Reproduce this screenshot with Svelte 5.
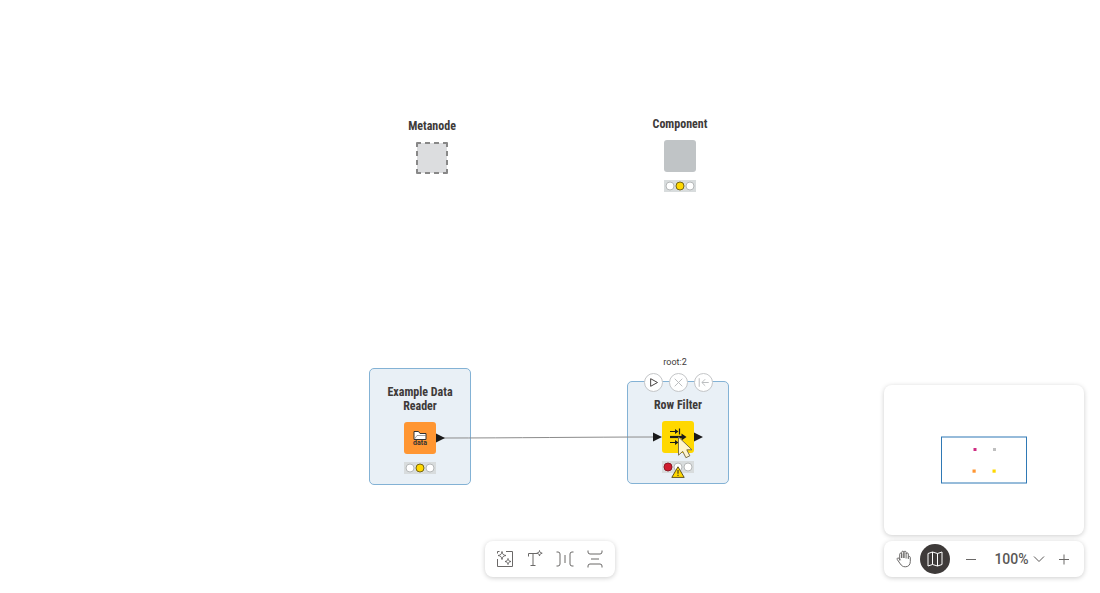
<script lang="ts">
  type Kind = 'metanode' | 'component' | 'reader' | 'filter';
  interface WorkflowNode {
    kind: Kind;
    name: string;
    x: number;
    y: number;
    selected: boolean;
    lights: string[];
  }

  const nodes: WorkflowNode[] = [
    { kind: 'metanode', name: 'Metanode', x: 381, y: 102, selected: false, lights: [] },
    { kind: 'component', name: 'Component', x: 629, y: 100, selected: false, lights: ['', 'yellow', ''] },
    { kind: 'reader', name: 'Example Data Reader', x: 369, y: 368, selected: true, lights: ['', 'yellow', ''] },
    { kind: 'filter', name: 'Row Filter', x: 627, y: 381, selected: true, lights: ['red', '', ''] }
  ];

  let zoom = $state(100);
</script>

<main class="canvas">
  {#each nodes as node}
    <article class="node" class:selected={node.selected} style="left: {node.x}px; top: {node.y}px">
      {#if node.kind === 'filter'}
        <div class="hover-bar">
          <span class="node-id">root:2</span>
          <div class="actions">
            <button aria-label="Execute">
              <svg viewBox="0 0 20 20"><path d="M7 6 14.200 10 7 14z" /></svg>
            </button>
            <button aria-label="Cancel" disabled>
              <svg viewBox="0 0 20 20"><path d="m6 6 8 8m0-8-8 8" /></svg>
            </button>
            <button aria-label="Reset" disabled>
              <svg viewBox="0 0 20 20"><path d="M5.500 5.500v9M15.500 10h-7m3.300-3.500L8.300 10l3.500 3.500" /></svg>
            </button>
          </div>
        </div>
      {/if}
      <h2>{node.name}</h2>
      <div class="torso {node.kind}">
        {#if node.kind === 'metanode'}
          <svg viewBox="0 0 32 32">
            <rect x="1" y="1" width="30" height="30" rx="1" fill="#dcdddf" />
            <path d="M1 5V1h4M9 1h5M18 1h5M27 1h4v4M31 9v5M31 18v5M31 27v4h-4M23 31h-5M14 31H9M5 31H1v-4M1 23v-5M1 14V9" fill="none" stroke="#888" stroke-width="2" stroke-linejoin="round" />
          </svg>
        {:else if node.kind === 'reader'}
          <svg viewBox="0 0 32 32">
            <path d="M10 17.500V9.500h4.500l1.500 2h6v6z" fill="#fff" stroke="#333" />
            <path d="M10.500 17 13 13.500h9" fill="none" stroke="#777" stroke-width=".7" />
            <text x="16" y="22.500" text-anchor="middle">data</text>
          </svg>
        {:else if node.kind === 'filter'}
          <svg viewBox="0 0 32 32">
            <g fill="none" stroke="#1c1c1c" stroke-width="1.200">
              <path d="M8 10.500h6M8 21.500h6M17.500 7.500v6M17.500 18.500v6" />
              <path d="M8 16h12" stroke-width="2.200" />
            </g>
            <path d="m13 8 3.500 2.500L13 13zM13 19l3.500 2.500L13 24zM19.500 12.500l5 3.500-5 3.500z" fill="#1c1c1c" />
          </svg>
        {/if}
      </div>
      {#if node.lights.length}
        <svg class="lights" viewBox="0 0 32 12" aria-hidden="true">
          {#each node.lights as light, i}<circle class={light} cx={6 + i * 10} cy="6" r="4" />{/each}
        </svg>
      {/if}
      {#if node.kind === 'filter'}
        <svg class="warning" viewBox="0 0 14 12" role="img" aria-label="Warning">
          <path d="M7 .8 13.200 11.400H.8z" fill="#ffd800" stroke="#5e5322" stroke-linejoin="round" />
          <path d="M7 4v3.800M7 8.800v1.200" fill="none" stroke="#4a4119" stroke-width="1.200" />
        </svg>
      {/if}
    </article>
  {/each}

  <svg class="wires" aria-hidden="true">
    <path d="M443 438C510 438 590 437 655 437" fill="none" stroke="#8c8c8c" />
    <path d="m436 433.500 9 4.500-9 4.500zM653 432.500l9 4.500-9 4.500zM694 432.500l9 4.500-9 4.500z" fill="#1a1a1a" />
    <path d="M678.500 437v18.200l4.200-3.800 3.200 6.300 3.900-1.900-3-6h5.200z" fill="#fff5cd" stroke="#7b6f4a" />
  </svg>

  <nav class="panel tools" aria-label="Canvas tools">
    <button aria-label="K-AI">
      <svg viewBox="0 0 20 20">
        <path d="M11 2.500h6.500v15h-15V10M2.500 4.500v-2h2M7 2.500c.5 2.800 1.200 3.500 4 4-2.800.5-3.500 1.200-4 4-.5-2.800-1.200-3.500-4-4 2.800-.5 3.500-1.200 4-4zM13 9.500c.4 2.100.9 2.600 3 3-2.100.4-2.600.9-3 3-.4-2.100-.9-2.600-3-3 2.100-.4 2.600-.9 3-3z" />
      </svg>
    </button>
    <button aria-label="New annotation">
      <svg viewBox="0 0 20 20">
        <path d="M3.500 7.500v-3H12M8 4.500v12M5.500 16.500h5M14.500 1.500c.4 1.900.8 2.300 2.700 2.700-1.900.4-2.300.8-2.700 2.700-.4-1.900-.8-2.300-2.700-2.700 1.900-.4 2.300-.8 2.700-2.700z" />
      </svg>
    </button>
    <button aria-label="Distribute horizontally">
      <svg viewBox="0 0 20 20">
        <path d="M1.500 3H3q2 0 2 2v10q0 2-2 2H1.500M18.500 3H17q-2 0-2 2v10q0 2 2 2h1.500M10 6v8" />
      </svg>
    </button>
    <button aria-label="Distribute vertically">
      <svg viewBox="0 0 20 20">
        <path d="M3 1.500V3q0 2 2 2h10q2 0 2-2V1.500M3 18.500V17q0-2 2-2h10q2 0 2 2v1.500M6 10h8" />
      </svg>
    </button>
  </nav>

  <aside class="dock">
    <div class="panel minimap">
      <svg viewBox="0 0 200 150" role="img" aria-label="Workflow minimap">
        <rect x="57.500" y="52" width="85" height="46" fill="none" stroke="#2f79b5" />
        <path d="M89.500 63h3v3h-3z" fill="#cf2c82" />
        <path d="M109 63h3v3h-3z" fill="#bfbfbf" />
        <path d="M88.500 84.500h3.200v3.200h-3.200z" fill="#ff9632" />
        <path d="M108.500 84.500h3.200v3.200h-3.200z" fill="#ffd800" />
      </svg>
    </div>
    <div class="panel controls">
      <button aria-label="Pan mode">
        <svg viewBox="0 0 20 20">
          <path d="M5.700 11.500V5.200c0-1.500 2-1.500 2 0V9M7.700 9V3.300c0-1.500 2.200-1.500 2.200 0V9M9.900 9V3.300c0-1.500 2.200-1.500 2.200 0V9.500M12.100 5c0-1.500 2.200-1.500 2.200 0v5M14.300 8.500c0-1.400 2-1.400 2 0v4c0 3.400-2 5.300-5 5.300-2.600 0-3.800-1.200-5-2.900l-3-4.300c-.8-1.200.7-2.300 1.700-1.200l1.500 1.800" />
        </svg>
      </button>
      <button class="map active" aria-label="Toggle minimap" aria-pressed="true">
        <svg viewBox="0 0 20 20">
          <path d="m3 4.500 4.500-1.500 5 1.500L17 3v12.500L12.500 17l-5-1.500L3 17zM7.500 3v12.500M12.500 4.500V17" />
        </svg>
      </button>
      <button aria-label="Zoom out" onclick={() => (zoom = Math.max(10, zoom - 10))}>
        <svg viewBox="0 0 20 20"><path d="M5 10.500h10" /></svg>
      </button>
      <button class="level" aria-label="Zoom level">
        {zoom}%
        <svg viewBox="0 0 12 12"><path d="m1 3.500 5 5 5-5" /></svg>
      </button>
      <button aria-label="Zoom in" onclick={() => (zoom += 10)}>
        <svg viewBox="0 0 20 20"><path d="M5 10.500h10M10 5.500v10" /></svg>
      </button>
    </div>
  </aside>
</main>

<style>
  :global(body) {
    margin: 0;
    background: #fff;
  }

  .canvas {
    position: relative;
    min-height: 100vh;
    overflow: hidden;
    color: #3e3a39;
    font-family: 'Roboto Condensed', Roboto, sans-serif;
  }

  .node {
    position: absolute;
    box-sizing: border-box;
    width: 102px;
    padding: 16px 11px 10px;
    border: 1px solid transparent;
    border-radius: 5px;
    display: flex;
    flex-direction: column;
    align-items: center;
  }

  .selected {
    background: #e9f0f6;
    border-color: #83b2d5;
  }

  h2 {
    margin: 0 0 9px;
    font-size: 12px;
    line-height: 14px;
    font-weight: 700;
    text-align: center;
  }

  .torso {
    width: 32px;
    height: 32px;
    border-radius: 3px;
  }

  .torso svg {
    display: block;
    width: 100%;
    height: 100%;
  }

  .component {
    background: #c0c4c6;
  }

  .reader {
    background: #ff9632;
  }

  .filter {
    background: #ffd800;
  }

  .torso text {
    font-family: Roboto, sans-serif;
    font-size: 7px;
    font-weight: 700;
    fill: #333;
  }

  .lights {
    width: 32px;
    height: 12px;
    margin-top: 8px;
    background: #d8dcdd;
  }

  .lights circle {
    fill: #fff;
    stroke: #b5b8b9;
  }

  .lights .yellow {
    fill: #ffd800;
    stroke: #756515;
  }

  .lights .red {
    fill: #d11c2e;
    stroke: #8c1a25;
  }

  .warning {
    position: absolute;
    left: 43px;
    bottom: 5px;
    width: 14px;
    height: 12px;
  }

  .hover-bar {
    position: absolute;
    left: 0;
    right: 0;
    top: -26px;
    display: flex;
    flex-direction: column;
    align-items: center;
    gap: 4px;
  }

  .node-id {
    padding-right: 6px;
    font-family: Roboto, sans-serif;
    font-size: 9px;
    line-height: 13px;
  }

  button {
    padding: 0;
    border: 0;
    background: none;
    color: #6a6867;
    font: inherit;
    display: flex;
    align-items: center;
    justify-content: center;
  }

  button path {
    fill: none;
    stroke: currentColor;
  }

  .actions {
    display: flex;
    gap: 6px;
  }

  .actions button {
    box-sizing: border-box;
    width: 19px;
    height: 19px;
    border: 1px solid #c4c6c8;
    border-radius: 50%;
    background: #fff;
    color: #3e3a39;
  }

  .actions button:disabled {
    color: #b8bbbd;
  }

  .actions svg {
    flex: none;
    width: 19px;
    height: 19px;
  }

  .wires {
    position: absolute;
    inset: 0;
    width: 100%;
    height: 100%;
    pointer-events: none;
  }

  .panel {
    background: #fff;
    border-radius: 8px;
    box-shadow: 0 1px 5px rgba(0, 0, 0, 0.2);
  }

  .tools {
    position: absolute;
    bottom: 16px;
    left: 50%;
    transform: translateX(-50%);
    padding: 3px 5px;
    display: flex;
  }

  .panel button {
    width: 30px;
    height: 30px;
  }

  .panel button svg {
    width: 20px;
    height: 20px;
  }

  .dock {
    position: absolute;
    right: 16px;
    bottom: 16px;
    width: 200px;
    display: flex;
    flex-direction: column;
    gap: 6px;
  }

  .minimap svg {
    display: block;
    width: 100%;
  }

  .controls {
    padding: 3px 5px;
    display: flex;
    align-items: center;
  }

  .panel .map {
    margin: 0 6px 0 1px;
    border-radius: 50%;
    background: #3e3a39;
    color: #fff;
  }

  .panel .level {
    flex: 1;
    width: auto;
    padding-left: 4px;
    gap: 4px;
    font-family: Roboto, sans-serif;
    font-size: 14px;
    font-weight: 500;
    color: #5a5756;
  }

  .panel .level svg {
    width: 12px;
    height: 12px;
  }
</style>
